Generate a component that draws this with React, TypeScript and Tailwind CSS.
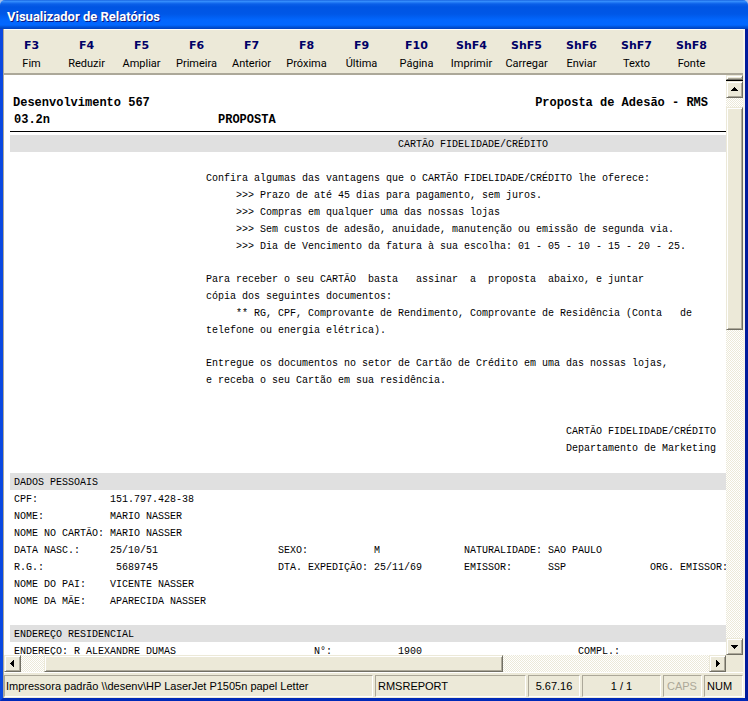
import type { ReactNode } from "react"

const actions = [
  { shortcut: "F3", label: "Fim" },
  { shortcut: "F4", label: "Reduzir" },
  { shortcut: "F5", label: "Ampliar" },
  { shortcut: "F6", label: "Primeira" },
  { shortcut: "F7", label: "Anterior" },
  { shortcut: "F8", label: "Próxima" },
  { shortcut: "F9", label: "Última" },
  { shortcut: "F10", label: "Página" },
  { shortcut: "ShF4", label: "Imprimir" },
  { shortcut: "ShF5", label: "Carregar" },
  { shortcut: "ShF6", label: "Enviar" },
  { shortcut: "ShF7", label: "Texto" },
  { shortcut: "ShF8", label: "Fonte" },
]

const track =
  "bg-[repeating-conic-gradient(#ffffff_0_25%,#ece9d8_0_50%)] bg-[length:2px_2px]"

const raised =
  "border border-t-[#ece9d8] border-l-[#ece9d8] border-r-[#716f64] border-b-[#716f64] bg-[#ece9d8] shadow-[inset_1px_1px_0_#ffffff,inset_-1px_-1px_0_#aca899]"

function TitleBar() {
  return (
    <header className="flex h-[29px] shrink-0 items-center rounded-t-[5px] bg-[linear-gradient(to_bottom,#0a51d5_0,#3c96ff_1px,#2a82f8_2px,#0a5fe8_4px,#0055e3_7px,#0057e7_14px,#0266fd_20px,#0267ff_25px,#0052d8_27px,#0040bd_29px)] pt-1 pl-[7px]">
      <h1 className="font-[Roboto,sans-serif] text-[13px] leading-4 font-bold text-white [text-shadow:1px_1px_0_#0a1883]">
        Visualizador de Relatórios
      </h1>
    </header>
  )
}

function Toolbar() {
  return (
    <nav className="flex h-[46px] shrink-0 border-t border-b-2 border-t-white border-b-[#aca899] bg-[#ece9d8]">
      {actions.map((action) => (
        <button
          key={action.shortcut}
          type="button"
          className="flex w-[55px] flex-col items-center pt-2"
        >
          <span className="font-['DejaVu_Sans',sans-serif] text-[11px] leading-4 font-bold text-[#000066]">
            {action.shortcut}
          </span>
          <span className="mt-[2px] font-[Roboto,sans-serif] text-[11px] leading-4 text-black">
            {action.label}
          </span>
        </button>
      ))}
    </nav>
  )
}

function Band({ children }: { children: ReactNode }) {
  return (
    <h2 className="mb-px h-[17px] bg-[#e0e0e0] pl-1 leading-[19px]">
      {children}
    </h2>
  )
}

function Row({ children }: { children: ReactNode }) {
  return (
    <div className="grid h-[17px] grid-cols-[96px_168px_96px_90px_84px_102px_auto] pl-1 whitespace-pre">
      {children}
    </div>
  )
}

function Report() {
  return (
    <main className="min-w-0 flex-1 overflow-hidden bg-white pl-[6px] font-['Liberation_Mono',monospace] text-[10px] leading-[17px] text-black">
      <div className="mb-[3px] border-b border-black pt-5 pb-[2px] text-[12px] leading-[17px] font-bold">
        <div className="flex justify-between pr-[18px] pl-[3px]">
          <span>Desenvolvimento 567</span>
          <span>Proposta de Adesão - RMS</span>
        </div>
        <div className="flex pl-1">
          <span className="w-[204px]">03.2n</span>
          <span>PROPOSTA</span>
        </div>
      </div>

      <h2 className="mb-px h-[17px] bg-[#e0e0e0] pl-[388px] leading-[19px]">
        CARTÃO FIDELIDADE/CRÉDITO
      </h2>

      <div className="flex flex-col gap-4 pt-[17px] pl-[196px] whitespace-pre">
        <div>
          <p>Confira algumas das vantagens que o CARTÃO FIDELIDADE/CRÉDITO lhe oferece:</p>
          <ul className="pl-[30px]">
            <li>{">>> Prazo de até 45 dias para pagamento, sem juros."}</li>
            <li>{">>> Compras em qualquer uma das nossas lojas"}</li>
            <li>{">>> Sem custos de adesão, anuidade, manutenção ou emissão de segunda via."}</li>
            <li>{">>> Dia de Vencimento da fatura à sua escolha: 01 - 05 - 10 - 15 - 20 - 25."}</li>
          </ul>
        </div>
        <div>
          <p>{"Para receber o seu CARTÃO  basta   assinar  a  proposta  abaixo, e juntar"}</p>
          <p>cópia dos seguintes documentos:</p>
          <p className="pl-[30px]">
            {"** RG, CPF, Comprovante de Rendimento, Comprovante de Residência (Conta   de"}
          </p>
          <p>telefone ou energia elétrica).</p>
        </div>
        <div>
          <p>Entregue os documentos no setor de Cartão de Crédito em uma das nossas lojas,</p>
          <p>e receba o seu Cartão em sua residência.</p>
        </div>
      </div>

      <div className="mt-[34px] mb-4 pl-[556px] whitespace-pre">
        <p>CARTÃO FIDELIDADE/CRÉDITO</p>
        <p>Departamento de Marketing</p>
      </div>

      <section className="mb-[15px]">
        <Band>DADOS PESSOAIS</Band>
        <Row>
          <span>CPF:</span>
          <span>151.797.428-38</span>
        </Row>
        <Row>
          <span>NOME:</span>
          <span>MARIO NASSER</span>
        </Row>
        <Row>
          <span>NOME NO CARTÃO:</span>
          <span>MARIO NASSER</span>
        </Row>
        <Row>
          <span>DATA NASC.:</span>
          <span>25/10/51</span>
          <span>SEXO:</span>
          <span>M</span>
          <span>NATURALIDADE:</span>
          <span>SAO PAULO</span>
        </Row>
        <Row>
          <span>R.G.:</span>
          <span>{" 5689745"}</span>
          <span>DTA. EXPEDIÇÃO:</span>
          <span>25/11/69</span>
          <span>EMISSOR:</span>
          <span>SSP</span>
          <span>ORG. EMISSOR:</span>
        </Row>
        <Row>
          <span>NOME DO PAI:</span>
          <span>VICENTE NASSER</span>
        </Row>
        <Row>
          <span>NOME DA MÃE:</span>
          <span>APARECIDA NASSER</span>
        </Row>
      </section>

      <section>
        <Band>ENDEREÇO RESIDENCIAL</Band>
        <div className="grid h-[17px] grid-cols-[60px_240px_84px_180px_auto] pl-1 whitespace-pre">
          <span>ENDEREÇO:</span>
          <span>R ALEXANDRE DUMAS</span>
          <span>N°:</span>
          <span>1900</span>
          <span>COMPL.:</span>
        </div>
      </section>
    </main>
  )
}

function ArrowButton({ label, points }: { label: string; points: string }) {
  return (
    <button
      type="button"
      aria-label={label}
      className={`flex size-[17px] shrink-0 items-center justify-center ${raised}`}
    >
      <svg viewBox="0 0 7 7" className="size-[7px]" shapeRendering="crispEdges">
        <polygon points={points} />
      </svg>
    </button>
  )
}

function VerticalScroll() {
  return (
    <div className="flex w-[17px] shrink-0 flex-col">
      <div className={`h-[5px] shrink-0 ${raised}`} />
      <div className="h-px shrink-0 bg-black" />
      <ArrowButton label="Rolar para cima" points="3,1 4,1 7,5 0,5" />
      <div className={`flex min-h-0 flex-1 flex-col pt-[9px] ${track}`}>
        <div className={`h-[42%] ${raised}`} />
      </div>
      <ArrowButton label="Rolar para baixo" points="0,2 7,2 4,6 3,6" />
    </div>
  )
}

function HorizontalScroll() {
  return (
    <div className="flex h-[17px] shrink-0 bg-[#ece9d8] pr-[17px]">
      <ArrowButton label="Rolar para a esquerda" points="5,0 5,7 1,4 1,3" />
      <div className={`flex min-w-0 flex-1 pl-[23px] ${track}`}>
        <div className={`w-[69%] ${raised}`} />
      </div>
      <ArrowButton label="Rolar para a direita" points="2,0 6,3 6,4 2,7" />
    </div>
  )
}

const cell =
  "flex items-center border border-t-[#aca899] border-l-[#aca899] border-r-white border-b-white"

function StatusBar() {
  return (
    <footer className="flex h-[26px] shrink-0 gap-[2px] border-t border-white bg-[#ece9d8] pt-[2px] pb-px font-['Liberation_Sans',sans-serif] text-[11px] whitespace-pre text-black">
      <span className={`flex-1 pl-px ${cell}`}>
        {"Impressora padrão \\\\desenv\\HP LaserJet P1505n papel Letter"}
      </span>
      <span className={`w-[151px] pl-[2px] ${cell}`}>RMSREPORT</span>
      <span className={`w-[52px] justify-center ${cell}`}>5.67.16</span>
      <span className={`w-[79px] justify-center ${cell}`}>1 / 1</span>
      <span className={`w-[39px] pl-[3px] text-[#aca899] ${cell}`}>CAPS</span>
      <span className={`w-[39px] pl-[2px] ${cell}`}>NUM</span>
    </footer>
  )
}

export default function App() {
  return (
    <div className="flex h-screen flex-col bg-[#a5bfe8]">
      <TitleBar />
      <div className="flex min-h-0 flex-1 flex-col border-x-[3px] border-b-[3px] border-r-[#001b9c] border-b-[#0029b8] border-l-[#0a48e0]">
        <div className="flex min-h-0 flex-1 flex-col border-r-2 border-l border-r-[#f5f3ea] border-l-[#aca899]">
          <Toolbar />
          <div className="flex min-h-0 flex-1">
            <Report />
            <VerticalScroll />
          </div>
          <HorizontalScroll />
          <StatusBar />
        </div>
      </div>
    </div>
  )
}
